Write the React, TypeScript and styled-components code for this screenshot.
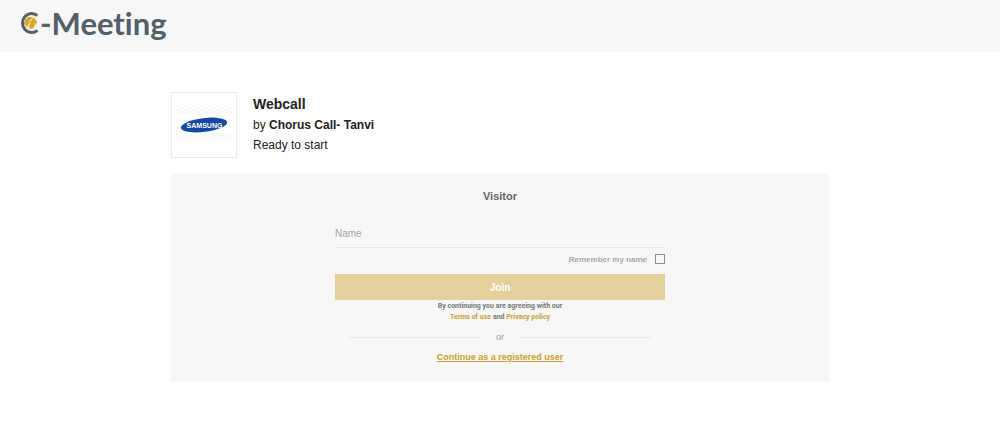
import React from "react";
import styled, { createGlobalStyle } from "styled-components";

const GlobalStyle = createGlobalStyle`
  * { box-sizing: border-box; }
  body {
    margin: 0;
    background: #ffffff;
    color: #222222;
    font-family: "Liberation Sans", Arial, sans-serif;
    font-size: 12px;
  }
`;

const Header = styled.header`
  display: flex;
  align-items: flex-start;
  height: 52px;
  padding: 0 20px;
  background: #f7f7f7;
`;

const Brand = styled.a`
  display: flex;
  align-items: center;
  color: #51606a;
  font-family: Lato, sans-serif;
  font-size: 31px;
  font-weight: 700;
  font-variant-ligatures: none;
  line-height: 46px;
  text-decoration: none;
`;

const BrandMark = styled.svg`
  display: block;
  width: 20px;
  height: 24px;
`;

const Main = styled.main`
  width: 66%;
  max-width: 658px;
  margin: 40px auto;
`;

const Meeting = styled.section`
  display: flex;
  gap: 16px;
`;

const LogoFrame = styled.div`
  display: flex;
  width: 66px;
  height: 66px;
  border: 1px solid #ebebeb;
  background: #ffffff;
`;

const MeetingInfo = styled.div`
  padding-top: 1px;
`;

const Title = styled.h1`
  margin: 0;
  font-size: 14px;
  line-height: 22px;
`;

const InfoLine = styled.p`
  margin: 0;
  line-height: 20px;
`;

const Panel = styled.section`
  display: flex;
  flex-direction: column;
  align-items: center;
  margin-top: 16px;
  padding: 14px 16px 19px;
  background: #f7f7f7;
`;

const PanelTitle = styled.h2`
  margin: 0;
  color: #666666;
  font-size: 11px;
  line-height: 16px;
`;

const Form = styled.form`
  display: flex;
  flex-direction: column;
  width: 100%;
  max-width: 330px;
  margin-top: 16px;
`;

const NameInput = styled.input`
  width: 100%;
  height: 28px;
  padding: 0;
  border: 0;
  border-bottom: 1px solid #e6e6e6;
  border-radius: 0;
  background: transparent;
  color: #555555;
  font: 10px "Liberation Sans", Arial, sans-serif;
  outline: 0;

  &::placeholder {
    color: #a3a3a3;
    opacity: 1;
  }
`;

const Remember = styled.label`
  display: flex;
  align-items: center;
  justify-content: flex-end;
  gap: 8px;
  height: 22px;
  color: #a8a8a8;
  font-size: 8px;
  font-weight: 700;
`;

const Checkbox = styled.input`
  appearance: none;
  width: 10px;
  height: 10px;
  margin: 0;
  border: 1px solid #8c8c8c;
  background: transparent;

  &:checked {
    background: #c9a032;
  }
`;

const JoinButton = styled.button`
  height: 26px;
  margin-top: 4px;
  padding: 0;
  border: 0;
  background: #e4d09d;
  color: #ffffff;
  font: 700 10px "Liberation Sans", Arial, sans-serif;
`;

const Terms = styled.p`
  margin: 1px 0 0;
  color: #777777;
  font-family: Roboto, sans-serif;
  font-size: 7px;
  font-weight: 700;
  line-height: 11px;
  text-align: center;
`;

const TermsLink = styled.a`
  color: #c9a032;
  text-decoration: none;
`;

const Divider = styled.div`
  display: flex;
  align-items: center;
  gap: 14px;
  margin: 8px 14px 0;
  color: #999999;
  font-size: 9px;
  line-height: 12px;

  &::before,
  &::after {
    content: "";
    flex: 1;
    height: 1px;
    background: #e9e9e9;
  }
`;

const RegisteredLink = styled.a`
  margin-top: 8px;
  color: #c9a032;
  font-size: 9px;
  font-weight: 700;
  line-height: 12px;
`;

function GlobeC() {
  return (
    <BrandMark viewBox="0 0 20 24" aria-hidden="true">
      <path d="M17.4 4.6A9.1 9.6 0 1 0 17.4 19.4" fill="none" stroke="#51606a" strokeWidth="3" />
      <circle cx="10.5" cy="12" r="6.3" fill="#f3e5bd" />
      <path
        d="M5 9l3-3 4 0-1 3-2 1 1 2-2 1-1 3-3-3zM13 6l3 3 1 3-2 1-2-1-2 1-1-2 2-2zM10 13l3-1 2 2-2 3-3 1-1-3z"
        fill="#d7a62b"
      />
    </BrandMark>
  );
}

function SamsungLogo() {
  return (
    <svg width="64" height="64" viewBox="0 0 64 64" role="img" aria-label="Samsung">
      <defs>
        <pattern id="checks" width="4" height="4" patternUnits="userSpaceOnUse">
          <path d="M0 0h2v2H0zM2 2h2v2H2z" fill="#f5f5f5" />
        </pattern>
      </defs>
      <path d="M4 12h56v9H4zM4 40h56v8H4z" fill="url(#checks)" />
      <ellipse cx="32" cy="32" rx="23.3" ry="6.9" fill="#1448a5" transform="rotate(-7 32 32)" />
      <text
        x="32.5"
        y="34.5"
        textAnchor="middle"
        fill="#ffffff"
        fontFamily="Liberation Sans, Arial, sans-serif"
        fontSize="7"
        fontWeight="700"
      >
        SAMSUNG
      </text>
    </svg>
  );
}

export default function App() {
  return (
    <>
      <GlobalStyle />
      <Header>
        <Brand href="#" aria-label="C-Meeting">
          <GlobeC />
          <span>-Meeting</span>
        </Brand>
      </Header>
      <Main>
        <Meeting>
          <LogoFrame>
            <SamsungLogo />
          </LogoFrame>
          <MeetingInfo>
            <Title>Webcall</Title>
            <InfoLine>
              by <strong>Chorus Call- Tanvi</strong>
            </InfoLine>
            <InfoLine>Ready to start</InfoLine>
          </MeetingInfo>
        </Meeting>
        <Panel>
          <PanelTitle>Visitor</PanelTitle>
          <Form onSubmit={(event) => event.preventDefault()}>
            <NameInput type="text" placeholder="Name" aria-label="Name" />
            <Remember>
              Remember my name
              <Checkbox type="checkbox" />
            </Remember>
            <JoinButton type="submit">Join</JoinButton>
            <Terms>
              By continuing you are agreeing with our
              <br />
              <TermsLink href="#">Terms of use</TermsLink> and{" "}
              <TermsLink href="#">Privacy policy</TermsLink>
            </Terms>
            <Divider>or</Divider>
          </Form>
          <RegisteredLink href="#">Continue as a registered user</RegisteredLink>
        </Panel>
      </Main>
    </>
  );
}
